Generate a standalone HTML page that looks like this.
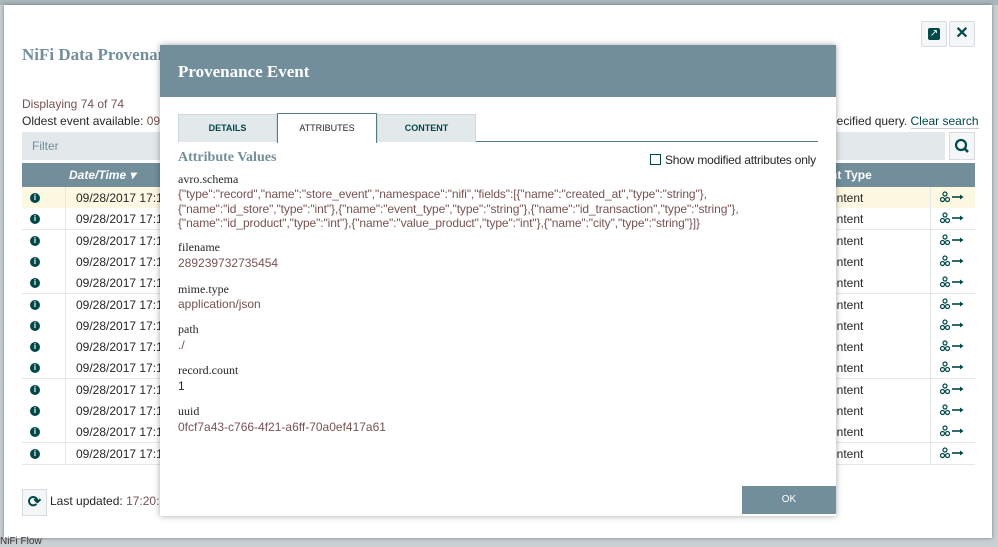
<!DOCTYPE html><html><head><style>
body{margin:0;width:998px;height:543px;overflow:hidden;background:#c9d0d4;font-family:"Liberation Sans",sans-serif;position:relative}
.a{position:absolute}
.outer{left:4px;top:5px;width:988px;height:533px;background:#fff;box-shadow:0 0 4px rgba(0,0,0,.4)}
.serif{font-family:"Liberation Serif",serif}
.row{position:absolute;left:22px;width:953px;height:21px;border-bottom:1px solid #e3e8eb;font-size:12px;color:#262626}
.row span{position:absolute;top:4px}
.ic{left:8px;width:10px;height:10px;border-radius:50%;background:#004849;color:#fff;font-size:8px;text-align:center;line-height:10px;font-weight:bold;top:6px!important}
.v{color:#775351;font-size:12px}
.l{color:#262626;font-size:12px}
</style></head><body>
<div class="a" style="left:0;top:0;width:998px;height:5px;background:#aab6bd"></div>
<div class="a outer"></div>
<div class="a" style="left:921px;top:21px;width:24px;height:24px;border:1px solid #d6dde1;background:#f4f6f7;border-radius:2px"><div style="margin:6px;width:12px;height:12px;background:#004849;border-radius:2px;color:#fff;font-size:10px;line-height:12px;text-align:center">↗</div></div>
<div class="a" style="left:949px;top:21px;width:24px;height:24px;border:1px solid #d6dde1;background:#f4f6f7;border-radius:2px;text-align:center;line-height:24px;font-weight:bold;color:#004849;font-size:16px">✕</div>
<div class="a serif" style="left:22px;top:45px;font-size:17px;font-weight:bold;color:#728e9b">NiFi Data Provenance</div>
<div class="a" style="left:22px;top:97px;font-size:12px;color:#775351">Displaying 74 of 74</div>
<div class="a" style="left:22px;top:114px;font-size:12px;color:#262626">Oldest event available: <span style="color:#775351">09/28</span></div>
<div class="a" style="left:830px;top:114px;font-size:12px;color:#262626">pecified query. <span style="color:#004849;border-bottom:1px solid #ccc">Clear search</span></div>
<div class="a" style="left:22px;top:132px;width:923px;height:28px;background:#e3e8eb;color:#728e9b;font-size:12px;line-height:28px;text-indent:10px">Filter</div>
<div class="a" style="left:949px;top:132px;width:24px;height:26px;border:1px solid #d6dde1;background:#f4f6f7"><svg width="24" height="26" viewBox="0 0 24 26"><circle cx="11" cy="12" r="5" fill="none" stroke="#004849" stroke-width="2.2"/><line x1="14.5" y1="15.5" x2="18" y2="19" stroke="#004849" stroke-width="2.6"/></svg></div>
<div class="a" style="left:22px;top:163px;width:953px;height:24px;background:#728e9b;color:#fff;font-size:12px;font-weight:bold;line-height:24px"><span style="position:absolute;left:47px;font-style:italic">Date/Time ▾</span><span style="position:absolute;left:808px">nt Type</span></div>
<div id="rows"></div>
<script>
var h='',t=['17:19','17:19','17:19','17:19','17:19','17:19','17:18','17:18','17:18','17:18','17:18','17:18','17:18','17:18'];
var icon='<svg width="26" height="12" viewBox="0 0 26 12"><circle cx="5" cy="3" r="2" fill="none" stroke="#004849" stroke-width="1.2"/><circle cx="2.5" cy="8.5" r="2" fill="none" stroke="#004849" stroke-width="1.2"/><circle cx="7.5" cy="8.5" r="2" fill="none" stroke="#004849" stroke-width="1.2"/><line x1="12" y1="6" x2="22" y2="6" stroke="#004849" stroke-width="1.6"/><path d="M20 3.5L23.5 6L20 8.5Z" fill="#004849"/></svg>';
for(var i=0;i<13;i++){var y=Math.round(187+i*21.3);h+='<div class="row" style="top:'+y+'px;background:'+(i==0?'#fdf8e1':'#fff')+'"><span class="ic">i</span><span style="left:43px;top:0;bottom:0;border-left:1px solid #e3e8eb"></span><span style="left:54px">09/28/2017 '+t[i]+'</span><span style="left:808px">ontent</span><span style="left:908px;top:0;bottom:0;border-left:1px solid #e3e8eb"></span><span style="left:918px">'+icon+'</span></div>';}
document.getElementById('rows').innerHTML=h;
</script>
<div class="a" style="left:4px;top:470px;width:988px;height:68px;background:#fff"></div>
<div class="a" style="left:22px;top:489px;width:23px;height:25px;border:1px solid #d6dde1;background:#f4f6f7;text-align:center;line-height:25px;color:#004849;font-weight:bold">⟳</div>
<div class="a" style="left:50px;top:494px;font-size:12px;color:#262626">Last updated: <span style="color:#775351">17:20:3</span></div>
<div class="a" style="left:0;top:536px;font-size:10px;color:#333">NiFi Flow</div>
<div class="a" style="left:160px;top:45px;width:676px;height:471px;background:#fff;box-shadow:0 0 6px rgba(0,0,0,.35)"></div>
<div class="a serif" style="left:160px;top:45px;width:676px;height:52px;background:#728e9b;color:#fff;font-size:17px;font-weight:bold;line-height:54px;text-indent:18px">Provenance Event</div>
<div class="a" style="left:178px;top:141px;width:640px;height:1px;background:#527d80"></div>
<div class="a" style="left:178px;top:114px;width:97px;height:27px;background:#e3e8eb;border:1px solid #cfd8dc;border-bottom:none;color:#004849;font-size:9px;font-weight:bold;text-align:center;line-height:27px">DETAILS</div>
<div class="a" style="left:277px;top:113px;width:98px;height:29px;background:#fff;border:1px solid #527d80;border-bottom:none;color:#262626;font-size:9px;text-align:center;line-height:29px">ATTRIBUTES</div>
<div class="a" style="left:377px;top:114px;width:97px;height:27px;background:#e3e8eb;border:1px solid #cfd8dc;border-bottom:none;color:#004849;font-size:9px;font-weight:bold;text-align:center;line-height:27px">CONTENT</div>
<div class="a serif" style="left:178px;top:150px;font-size:14px;font-weight:bold;color:#728e9b">Attribute Values</div>
<div class="a" style="left:650px;top:154px;width:9px;height:9px;border:1.5px solid #004849"></div>
<div class="a" style="left:665px;top:153px;font-size:12px;color:#262626;letter-spacing:-0.2px">Show modified attributes only</div>
<div class="a serif l" style="left:178px;top:172px">avro.schema</div>
<div class="a v" style="left:178px;top:187px;line-height:14.5px;font-size:12px;letter-spacing:-0.1px">{"type":"record","name":"store_event","namespace":"nifi","fields":[{"name":"created_at","type":"string"},<br>{"name":"id_store","type":"int"},{"name":"event_type","type":"string"},{"name":"id_transaction","type":"string"},<br>{"name":"id_product","type":"int"},{"name":"value_product","type":"int"},{"name":"city","type":"string"}]}</div>
<div class="a serif l" style="left:178px;top:240px">filename</div>
<div class="a v" style="left:178px;top:256px">289239732735454</div>
<div class="a serif l" style="left:178px;top:282px">mime.type</div>
<div class="a v" style="left:178px;top:297px">application/json</div>
<div class="a serif l" style="left:178px;top:322px">path</div>
<div class="a v" style="left:178px;top:338px">./</div>
<div class="a serif l" style="left:178px;top:363px">record.count</div>
<div class="a l" style="left:178px;top:379px">1</div>
<div class="a serif l" style="left:178px;top:404px">uuid</div>
<div class="a v" style="left:178px;top:420px">0fcf7a43-c766-4f21-a6ff-70a0ef417a61</div>
<div class="a" style="left:742px;top:486px;width:94px;height:28px;background:#728e9b;color:#fff;font-size:10px;text-align:center;line-height:28px">OK</div>
</body></html>
